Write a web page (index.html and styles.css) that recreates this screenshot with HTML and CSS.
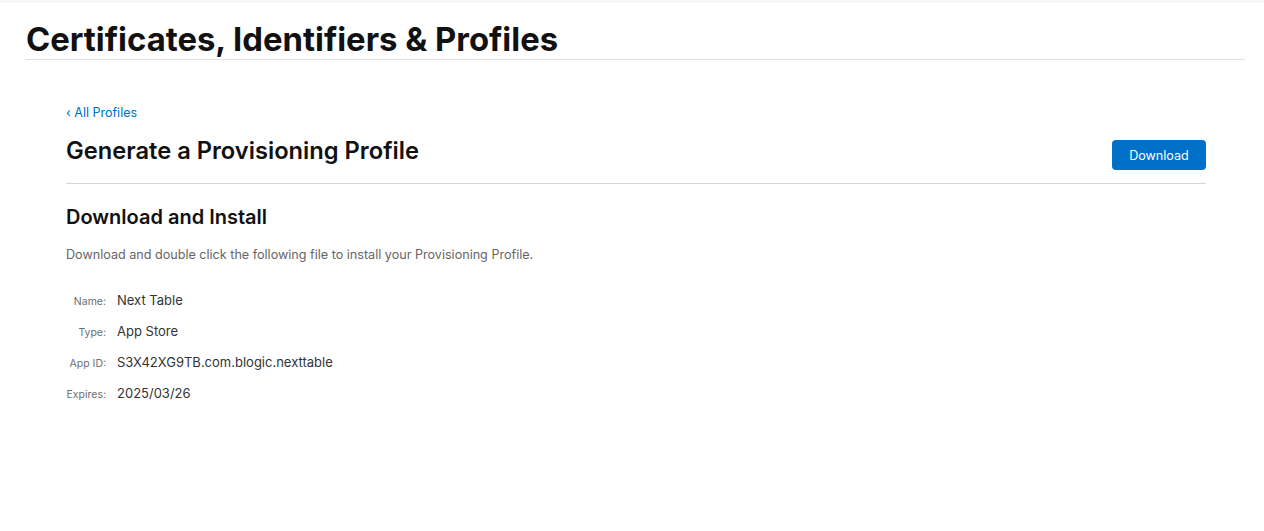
FILE: index.html
```html
<!DOCTYPE html>
<html>
<head>
<meta charset="utf-8">
<link rel="stylesheet" href="styles.css">
</head>
<body>
<div class="topband"></div>
<header class="pagehead">
  <h1 class="pagetitle">Certificates, Identifiers &amp; Profiles</h1>
</header>
<main class="content">
  <a class="backlink" href="#">&lsaquo; All Profiles</a>
  <div class="titlebar">
    <h2 class="maintitle">Generate a Provisioning Profile</h2>
    <button class="btn">Download</button>
  </div>
  <section class="section">
    <h3 class="sectitle">Download and Install</h3>
    <p class="desc">Download and double click the following file to install your Provisioning Profile.</p>
    <dl class="details">
      <div class="row"><dt>Name:</dt><dd>Next Table</dd></div>
      <div class="row"><dt>Type:</dt><dd>App Store</dd></div>
      <div class="row"><dt>App ID:</dt><dd>S3X42XG9TB.com.blogic.nexttable</dd></div>
      <div class="row"><dt>Expires:</dt><dd>2025/03/26</dd></div>
    </dl>
  </section>
</main>
</body>
</html>
```
FILE: styles.css
```css
* { box-sizing: border-box; }
html, body { margin: 0; padding: 0; background: #fff; }
body { font-family: Inter, "Noto Sans", sans-serif; color: #1d1d1f; }
.topband { height: 3px; background: #f7f7f7; }
.pagehead { margin: 0 19px 0 26px; border-bottom: 1px solid #e0e0e0; padding-top: 17px; height: 57px; }
.pagetitle { margin: 0; font-size: 32.85px; font-weight: 700; line-height: 38px; letter-spacing: 0; color: #111; }
.content { margin: 0 58px 0 66px; padding-top: 44px; }
.backlink { display: block; font-size: 12.5px; line-height: 17px; color: #0070c9; text-decoration: none; }
.titlebar { display: flex; justify-content: space-between; align-items: flex-start; border-bottom: 1px solid #d6d6d6; padding-top: 17px; height: 63px; }
.maintitle { margin: 0; font-size: 23.7px; font-weight: 600; line-height: 26px; color: #111; }
.btn { margin-top: 2px; width: 94px; height: 30px; border: 0; border-radius: 4px; background: #0070c9; color: #fff; font-family: Inter, sans-serif; font-size: 12.6px; padding: 0; }
.section { padding-top: 20px; }
.sectitle { margin: 0; font-size: 20px; font-weight: 600; line-height: 26px; color: #111; }
.desc { margin: 17px 0 0; font-size: 12.6px; line-height: 16px; color: #666; }
.details { margin: 29px 0 0; }
.row { display: flex; align-items: baseline; height: 31px; }
.row dt { width: 40px; text-align: right; font-size: 10.5px; color: #6e6e6e; white-space: nowrap; }
.row dd { margin: 0 0 0 11px; font-size: 13px; color: #333; }
```
